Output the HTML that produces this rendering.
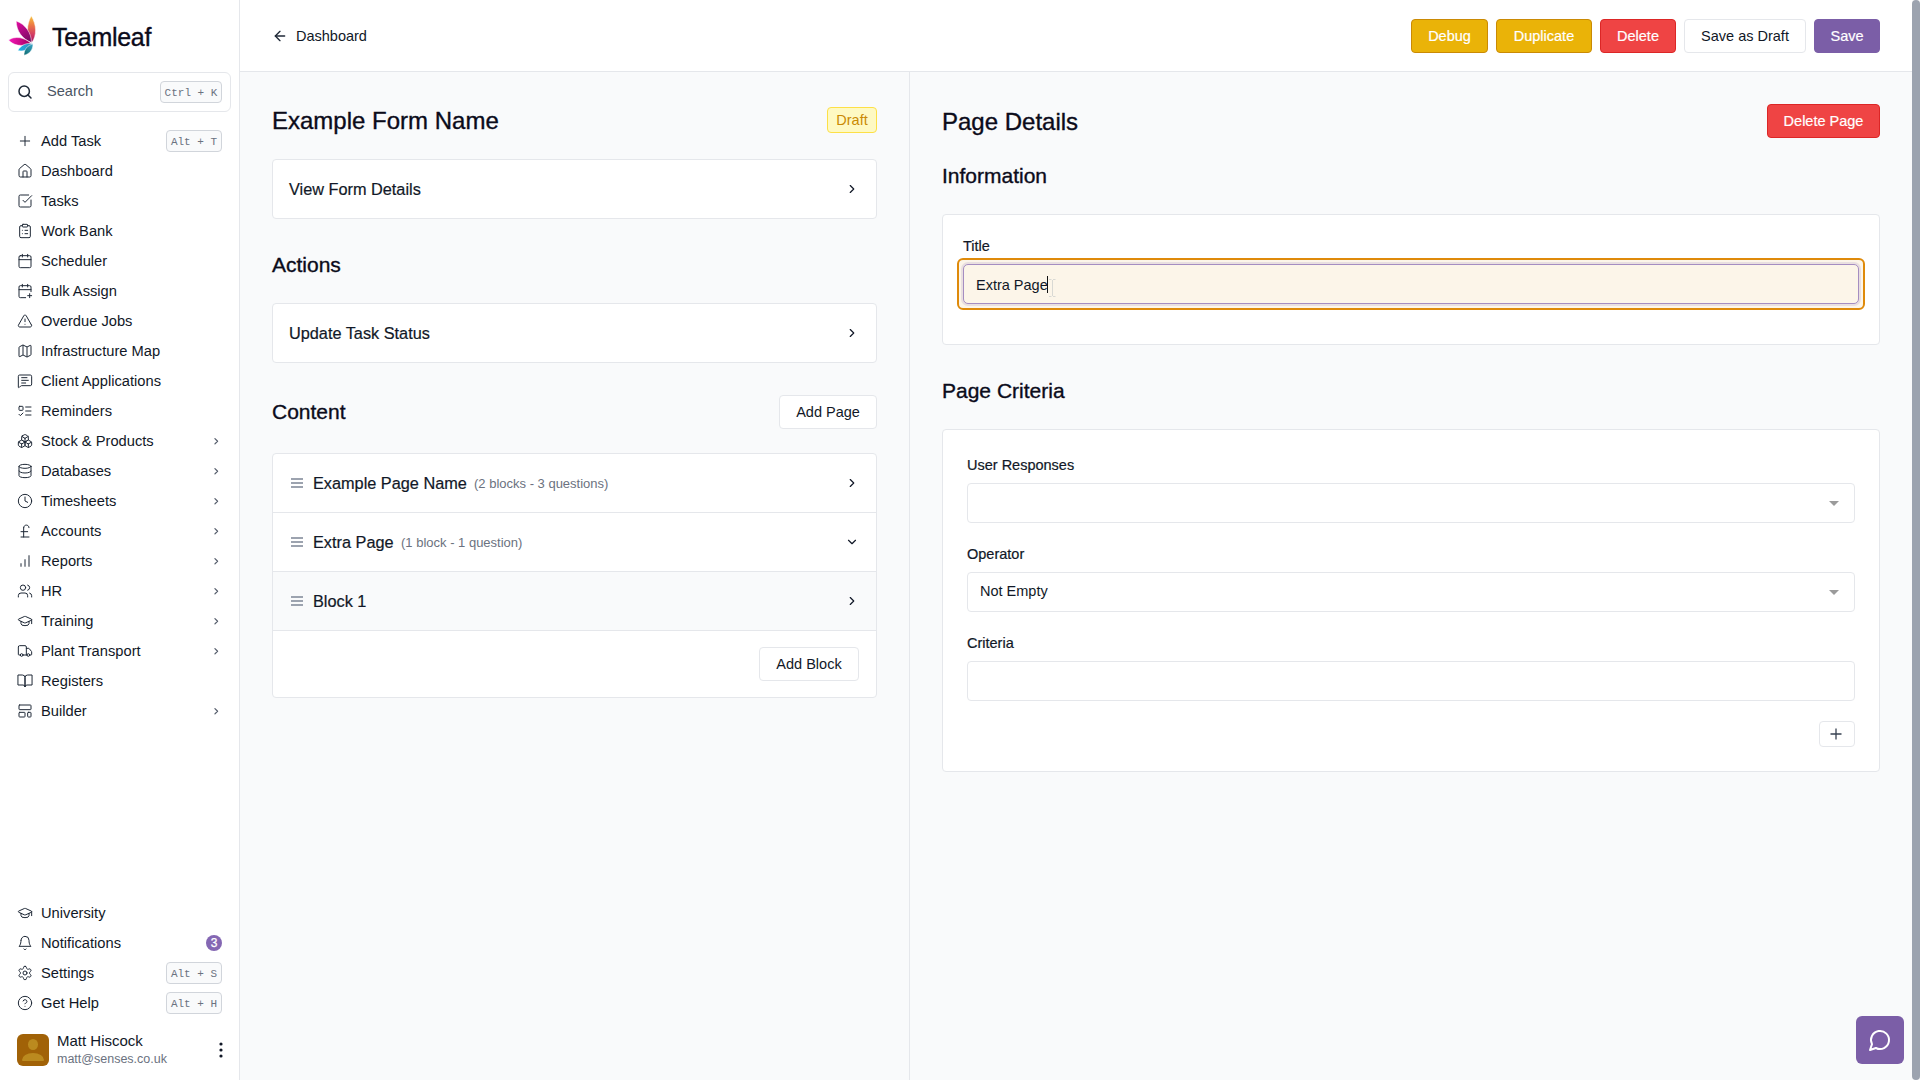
<!DOCTYPE html>
<html><head><meta charset="utf-8">
<style>
*{box-sizing:border-box;margin:0;padding:0}
html,body{width:1920px;height:1080px;overflow:hidden;background:#f9fafb;font-family:"Liberation Sans",sans-serif;color:#111827}
.abs{position:absolute}
#sb{position:absolute;left:0;top:0;width:240px;height:1080px;background:#fff;border-right:1px solid #e5e7eb}
#hdr{position:absolute;left:240px;top:0;width:1672px;height:72px;background:#fff;border-bottom:1px solid #e5e7eb}
#scroll{position:absolute;left:1912px;top:0;width:8px;height:1080px;background:#9ca3af;border-radius:4px}
#divider{position:absolute;left:909px;top:72px;width:1px;height:1008px;background:#e5e7eb}
.nav{position:absolute;left:8px;width:222px;height:30px;display:flex;align-items:center;font-size:15px;color:#111827}
.nav svg{position:absolute;left:9px;top:7px;width:16px;height:16px;fill:none;stroke:#1f2937;stroke-width:1.5;stroke-linecap:round;stroke-linejoin:round}
.nav span.t{position:absolute;left:33px;top:6px;line-height:18px;font-size:14.7px}
.nav .chev{position:absolute;left:202.7px;top:9.6px;width:10.5px;height:10.5px;stroke-width:2.9;stroke:#565e6c}
.kbd{position:absolute;font-family:"Liberation Mono",monospace;font-size:11px;color:#6b7280;background:#f9fafb;border:1px solid #d1d5db;border-radius:4px;height:22px;line-height:22px;text-align:center}
.k2{left:158px;top:4px;width:56px}
.badge{position:absolute;left:198px;top:7px;width:16px;height:16px;border-radius:8px;background:#8467b3;color:#fff;font-size:12px;-webkit-text-stroke:0.25px #fff;text-align:center;line-height:17px}
.btn{position:absolute;height:34px;border-radius:4px;font-size:14.5px;display:flex;align-items:center;justify-content:center;border:1px solid transparent}
.card{position:absolute;background:#fff;border:1px solid #e5e7eb;border-radius:4px}
.h2{position:absolute;font-size:20px;color:#111827}
.lbl{position:absolute;font-size:14.5px;color:#111827;-webkit-text-stroke:0.2px #111827}
.t16{font-size:16.3px;color:#111827;-webkit-text-stroke:0.2px #111827}
.sub{font-size:13px;color:#6b7280}
.chv{position:absolute;width:14px;height:14px;fill:none;stroke:#111827;stroke-width:2;stroke-linecap:round;stroke-linejoin:round}
.grip{position:absolute;width:16px;height:16px;fill:none;stroke:#9ca3af;stroke-width:2}
.inp{position:absolute;background:#fff;border:1px solid #e5e7eb;border-radius:4px}
</style></head><body>
<div id="sb">
  <!-- logo -->
  <svg class="abs" style="left:4px;top:12px" width="40" height="48" viewBox="4 12 40 48">
    <defs>
      <linearGradient id="lg1" gradientUnits="userSpaceOnUse" x1="31" y1="16" x2="31" y2="42"><stop offset="0" stop-color="#f7c23a"/><stop offset="0.35" stop-color="#ec7a45"/><stop offset="0.7" stop-color="#d43d63"/><stop offset="1" stop-color="#a81060"/></linearGradient>
      <linearGradient id="lg2" gradientUnits="userSpaceOnUse" x1="17" y1="21" x2="31" y2="42"><stop offset="0" stop-color="#e20ba0"/><stop offset="1" stop-color="#6e0c5c"/></linearGradient>
      <linearGradient id="lg3" gradientUnits="userSpaceOnUse" x1="9" y1="40" x2="31" y2="43"><stop offset="0" stop-color="#f515b8"/><stop offset="1" stop-color="#a0005a"/></linearGradient>
      <linearGradient id="lg4" gradientUnits="userSpaceOnUse" x1="18" y1="50" x2="33" y2="44"><stop offset="0" stop-color="#1ab4e6"/><stop offset="1" stop-color="#3b8ab5"/></linearGradient>
      <linearGradient id="lg5" gradientUnits="userSpaceOnUse" x1="24" y1="55" x2="33" y2="44"><stop offset="0" stop-color="#0f6b70"/><stop offset="1" stop-color="#3aa6c8"/></linearGradient>
    </defs>
    <path d="M31.80 42.50 C37.01 35.73 36.81 25.05 31.30 15.80 C26.14 25.24 26.34 35.92 31.80 42.50Z" stroke="#fff" stroke-width="0.5" fill="url(#lg1)"/><path d="M31.50 42.50 C31.47 32.80 25.35 24.20 16.20 21.00 C16.23 30.70 22.35 39.30 31.50 42.50Z" stroke="#fff" stroke-width="0.5" fill="url(#lg2)"/><path d="M31.00 43.20 C23.88 37.06 14.92 35.78 8.60 40.00 C13.48 45.82 22.44 47.10 31.00 43.20Z" stroke="#fff" stroke-width="0.5" fill="url(#lg3)"/><path d="M32.80 43.80 C26.70 42.32 20.70 45.04 17.80 50.60 C23.90 52.08 29.90 49.36 32.80 43.80Z" stroke="#fff" stroke-width="0.5" fill="url(#lg4)"/><path d="M33.00 44.00 C27.49 45.10 23.89 49.58 24.00 55.20 C29.51 54.10 33.11 49.62 33.00 44.00Z" stroke="#fff" stroke-width="0.5" fill="url(#lg5)"/>
  </svg>
  <div class="abs" style="left:52px;top:23px;font-size:25px;color:#0b0b1a;letter-spacing:-0.3px;-webkit-text-stroke:0.35px #0b0b1a">Teamleaf</div>
  <!-- search -->
  <div class="abs" style="left:8px;top:72px;width:223px;height:40px;border:1px solid #e5e7eb;border-radius:6px"></div>
  <svg class="abs" style="left:17px;top:84px" width="16" height="16" viewBox="0 0 16 16" fill="none" stroke="#1f2937" stroke-width="1.5" stroke-linecap="round"><circle cx="7.2" cy="7.2" r="5.2"/><path d="M11 11l3 3"/></svg>
  <div class="abs" style="left:47px;top:83px;font-size:14.6px;color:#4b5563">Search</div>
  <div class="kbd" style="left:160px;top:81px;width:62px">Ctrl + K</div>

  <div id="navs">
<div class="nav" style="top:126px"><svg viewBox="0 0 24 24"><path d="M5 12h14"/><path d="M12 5v14"/></svg><span class="t">Add Task</span><span class="kbd k2">Alt + T</span></div>
<div class="nav" style="top:156px"><svg viewBox="0 0 24 24"><path d="M15 21v-8a1 1 0 0 0-1-1h-4a1 1 0 0 0-1 1v8"/><path d="M3 10a2 2 0 0 1 .709-1.528l7-5.999a2 2 0 0 1 2.582 0l7 5.999A2 2 0 0 1 21 10v9a2 2 0 0 1-2 2H5a2 2 0 0 1-2-2z"/></svg><span class="t">Dashboard</span></div>
<div class="nav" style="top:186px"><svg viewBox="0 0 24 24"><path d="M21 10.5V19a2 2 0 0 1-2 2H5a2 2 0 0 1-2-2V5a2 2 0 0 1 2-2h12.5"/><path d="m9 11 3 3L22 4"/></svg><span class="t">Tasks</span></div>
<div class="nav" style="top:216px"><svg viewBox="0 0 24 24"><rect width="8" height="4" x="8" y="2" rx="1" ry="1"/><path d="M16 4h2a2 2 0 0 1 2 2v14a2 2 0 0 1-2 2H6a2 2 0 0 1-2-2V6a2 2 0 0 1 2-2h2"/><path d="M12 11h4"/><path d="M12 16h4"/><path d="M8 11h.01"/><path d="M8 16h.01"/></svg><span class="t">Work Bank</span></div>
<div class="nav" style="top:246px"><svg viewBox="0 0 24 24"><path d="M8 2v4"/><path d="M16 2v4"/><rect width="18" height="18" x="3" y="4" rx="2"/><path d="M3 10h18"/></svg><span class="t">Scheduler</span></div>
<div class="nav" style="top:276px"><svg viewBox="0 0 24 24"><path d="M8 2v4"/><path d="M16 2v4"/><path d="M21 13V6a2 2 0 0 0-2-2H5a2 2 0 0 0-2 2v14a2 2 0 0 0 2 2h8"/><path d="M3 10h18"/><path d="M16 19h6"/><path d="M19 16v6"/></svg><span class="t">Bulk Assign</span></div>
<div class="nav" style="top:306px"><svg viewBox="0 0 24 24"><path d="m21.73 18-8-14a2 2 0 0 0-3.48 0l-8 14A2 2 0 0 0 4 21h16a2 2 0 0 0 1.73-3"/><path d="M12 9v4"/><path d="M12 17h.01"/></svg><span class="t">Overdue Jobs</span></div>
<div class="nav" style="top:336px"><svg viewBox="0 0 24 24"><path d="M14.106 5.553a2 2 0 0 0 1.788 0l3.659-1.83A1 1 0 0 1 21 4.619v12.764a1 1 0 0 1-.553.894l-4.553 2.277a2 2 0 0 1-1.788 0l-4.212-2.106a2 2 0 0 0-1.788 0l-3.659 1.83A1 1 0 0 1 3 19.381V6.618a1 1 0 0 1 .553-.894l4.553-2.277a2 2 0 0 1 1.788 0z"/><path d="M15 5.764v15"/><path d="M9 3.236v15"/></svg><span class="t">Infrastructure Map</span></div>
<div class="nav" style="top:366px"><svg viewBox="0 0 24 24"><path d="M22 17a2 2 0 0 1-2 2H6.828a2 2 0 0 0-1.414.586l-2.202 2.202A.71.71 0 0 1 2 21.286V5a2 2 0 0 1 2-2h16a2 2 0 0 1 2 2z"/><path d="M7 11h10"/><path d="M7 15h6"/><path d="M7 7h8"/></svg><span class="t">Client Applications</span></div>
<div class="nav" style="top:396px"><svg viewBox="0 0 24 24"><rect x="3" y="5" width="6" height="6" rx="1"/><path d="m3 17 2 2 4-4"/><path d="M13 6h8"/><path d="M13 12h8"/><path d="M13 18h8"/></svg><span class="t">Reminders</span></div>
<div class="nav" style="top:426px"><svg viewBox="0 0 24 24"><path d="M2.97 12.92A2 2 0 0 0 2 14.63v3.24a2 2 0 0 0 .97 1.71l3 1.8a2 2 0 0 0 2.06 0L12 19v-5.5l-5-3-4.03 2.42Z"/><path d="m7 16.5-4.74-2.85"/><path d="m7 16.5 5-3"/><path d="M7 16.5v5.17"/><path d="M12 13.5V19l3.97 2.38a2 2 0 0 0 2.06 0l3-1.8a2 2 0 0 0 .97-1.71v-3.24a2 2 0 0 0-.97-1.71L17 10.5l-5 3Z"/><path d="m17 16.5-5-3"/><path d="m17 16.5 4.74-2.85"/><path d="M17 16.5v5.17"/><path d="M7.97 4.42A2 2 0 0 0 7 6.13v4.37l5 3 5-3V6.13a2 2 0 0 0-.97-1.71l-3-1.8a2 2 0 0 0-2.06 0l-3 1.8Z"/><path d="M12 8 7.26 5.15"/><path d="m12 8 4.74-2.85"/><path d="M12 13.5V8"/></svg><span class="t">Stock &amp; Products</span><svg class="chev" viewBox="0 0 24 24"><path d="m9 18 6-6-6-6"/></svg></div>
<div class="nav" style="top:456px"><svg viewBox="0 0 24 24"><ellipse cx="12" cy="5" rx="9" ry="3"/><path d="M3 5V19A9 3 0 0 0 21 19V5"/><path d="M3 12A9 3 0 0 0 21 12"/></svg><span class="t">Databases</span><svg class="chev" viewBox="0 0 24 24"><path d="m9 18 6-6-6-6"/></svg></div>
<div class="nav" style="top:486px"><svg viewBox="0 0 24 24"><circle cx="12" cy="12" r="10"/><path d="M12 6v6l4 2"/></svg><span class="t">Timesheets</span><svg class="chev" viewBox="0 0 24 24"><path d="m9 18 6-6-6-6"/></svg></div>
<div class="nav" style="top:516px"><svg viewBox="0 0 24 24"><path d="M18 7c0-5.333-8-5.333-8 0"/><path d="M10 7v14"/><path d="M6 21h12"/><path d="M6 13h10"/></svg><span class="t">Accounts</span><svg class="chev" viewBox="0 0 24 24"><path d="m9 18 6-6-6-6"/></svg></div>
<div class="nav" style="top:546px"><svg viewBox="0 0 24 24"><path d="M18 20V4"/><path d="M12 20V10"/><path d="M6 20v-4"/></svg><span class="t">Reports</span><svg class="chev" viewBox="0 0 24 24"><path d="m9 18 6-6-6-6"/></svg></div>
<div class="nav" style="top:576px"><svg viewBox="0 0 24 24"><path d="M16 21v-2a4 4 0 0 0-4-4H6a4 4 0 0 0-4 4v2"/><circle cx="9" cy="7" r="4"/><path d="M22 21v-2a4 4 0 0 0-3-3.87"/><path d="M16 3.13a4 4 0 0 1 0 7.75"/></svg><span class="t">HR</span><svg class="chev" viewBox="0 0 24 24"><path d="m9 18 6-6-6-6"/></svg></div>
<div class="nav" style="top:606px"><svg viewBox="0 0 24 24"><path d="M21.42 10.922a1 1 0 0 0-.019-1.838L12.83 5.18a2 2 0 0 0-1.66 0L2.6 9.08a1 1 0 0 0 0 1.832l8.57 3.908a2 2 0 0 0 1.66 0z"/><path d="M22 10v6"/><path d="M6 12.5V16a6 3 0 0 0 12 0v-3.5"/></svg><span class="t">Training</span><svg class="chev" viewBox="0 0 24 24"><path d="m9 18 6-6-6-6"/></svg></div>
<div class="nav" style="top:636px"><svg viewBox="0 0 24 24"><path d="M14 18V6a2 2 0 0 0-2-2H4a2 2 0 0 0-2 2v11a1 1 0 0 0 1 1h2"/><path d="M15 18H9"/><path d="M19 18h2a1 1 0 0 0 1-1v-3.65a1 1 0 0 0-.22-.624l-3.48-4.35A1 1 0 0 0 17.52 8H14"/><circle cx="17" cy="18" r="2"/><circle cx="7" cy="18" r="2"/></svg><span class="t">Plant Transport</span><svg class="chev" viewBox="0 0 24 24"><path d="m9 18 6-6-6-6"/></svg></div>
<div class="nav" style="top:666px"><svg viewBox="0 0 24 24"><path d="M2 3h6a4 4 0 0 1 4 4v14a3 3 0 0 0-3-3H2z"/><path d="M22 3h-6a4 4 0 0 0-4 4v14a3 3 0 0 1 3-3h7z"/></svg><span class="t">Registers</span></div>
<div class="nav" style="top:696px"><svg viewBox="0 0 24 24"><rect width="18" height="7" x="3" y="3" rx="1"/><rect width="9" height="7" x="3" y="14" rx="1"/><rect width="5" height="7" x="16" y="14" rx="1"/></svg><span class="t">Builder</span><svg class="chev" viewBox="0 0 24 24"><path d="m9 18 6-6-6-6"/></svg></div>
<div class="nav" style="top:898px"><svg viewBox="0 0 24 24"><path d="M21.42 10.922a1 1 0 0 0-.019-1.838L12.83 5.18a2 2 0 0 0-1.66 0L2.6 9.08a1 1 0 0 0 0 1.832l8.57 3.908a2 2 0 0 0 1.66 0z"/><path d="M22 10v6"/><path d="M6 12.5V16a6 3 0 0 0 12 0v-3.5"/></svg><span class="t">University</span></div>
<div class="nav" style="top:928px"><svg viewBox="0 0 24 24"><path d="M6 8a6 6 0 0 1 12 0c0 7 3 9 3 9H3s3-2 3-9"/><path d="M10.3 21a1.94 1.94 0 0 0 3.4 0"/></svg><span class="t">Notifications</span><span class="badge">3</span></div>
<div class="nav" style="top:958px"><svg viewBox="0 0 24 24"><path d="M12.22 2h-.44a2 2 0 0 0-2 2v.18a2 2 0 0 1-1 1.73l-.43.25a2 2 0 0 1-2 0l-.15-.08a2 2 0 0 0-2.73.73l-.22.38a2 2 0 0 0 .73 2.73l.15.1a2 2 0 0 1 1 1.72v.51a2 2 0 0 1-1 1.74l-.15.09a2 2 0 0 0-.73 2.73l.22.38a2 2 0 0 0 2.73.73l.15-.08a2 2 0 0 1 2 0l.43.25a2 2 0 0 1 1 1.73V20a2 2 0 0 0 2 2h.44a2 2 0 0 0 2-2v-.18a2 2 0 0 1 1-1.73l.43-.25a2 2 0 0 1 2 0l.15.08a2 2 0 0 0 2.73-.73l.22-.39a2 2 0 0 0-.73-2.73l-.15-.08a2 2 0 0 1-1-1.74v-.5a2 2 0 0 1 1-1.74l.15-.09a2 2 0 0 0 .73-2.73l-.22-.38a2 2 0 0 0-2.73-.73l-.15.08a2 2 0 0 1-2 0l-.43-.25a2 2 0 0 1-1-1.73V4a2 2 0 0 0-2-2z"/><circle cx="12" cy="12" r="3"/></svg><span class="t">Settings</span><span class="kbd k2">Alt + S</span></div>
<div class="nav" style="top:988px"><svg viewBox="0 0 24 24"><circle cx="12" cy="12" r="10"/><path d="M9.09 9a3 3 0 0 1 5.83 1c0 2-3 3-3 3"/><path d="M12 17h.01"/></svg><span class="t">Get Help</span><span class="kbd k2">Alt + H</span></div>
</div><!--/navs-->
</div>

<div id="hdr">
  <svg class="abs" style="left:32px;top:28px" width="16" height="16" viewBox="0 0 24 24" fill="none" stroke="#1f2937" stroke-width="2" stroke-linecap="round" stroke-linejoin="round"><path d="m12 19-7-7 7-7"/><path d="M19 12H5"/></svg>
  <div class="abs" style="left:56px;top:28px;font-size:14.5px;color:#111827">Dashboard</div>
  <div class="btn" style="left:1171px;top:19px;width:77px;background:#eab308;border-color:#ca8a04;color:#fff;-webkit-text-stroke:0.2px #fff">Debug</div>
  <div class="btn" style="left:1256px;top:19px;width:96px;background:#eab308;border-color:#ca8a04;color:#fff;-webkit-text-stroke:0.2px #fff">Duplicate</div>
  <div class="btn" style="left:1360px;top:19px;width:76px;background:#ef4444;border-color:#dc2626;color:#fff;-webkit-text-stroke:0.2px #fff">Delete</div>
  <div class="btn" style="left:1444px;top:19px;width:122px;background:#fff;border-color:#e5e7eb;color:#111827">Save as Draft</div>
  <div class="btn" style="left:1574px;top:19px;width:66px;background:#7b5ea7;border-color:#7b5ea7;color:#fff;-webkit-text-stroke:0.2px #fff">Save</div>
</div>

<div id="divider"></div>

<!-- LEFT COLUMN -->
<div class="abs" style="left:272px;top:107px;font-size:24px;color:#0b0b1a;-webkit-text-stroke:0.35px #0b0b1a">Example Form Name</div>
<div class="abs" style="left:827px;top:107px;width:50px;height:26px;border:1px solid #fde047;background:#fef9c3;border-radius:4px;color:#ca8a04;font-size:14.5px;text-align:center;line-height:24px">Draft</div>

<div class="card" style="left:272px;top:159px;width:605px;height:60px"></div>
<div class="abs t16" style="left:289px;top:180px">View Form Details</div>
<svg class="chv" style="left:845px;top:182px" viewBox="0 0 24 24"><path d="m9 18 6-6-6-6"/></svg>

<div class="abs" style="left:272px;top:253px;font-size:21px;color:#0b0b1a;-webkit-text-stroke:0.35px #0b0b1a">Actions</div>
<div class="card" style="left:272px;top:303px;width:605px;height:60px"></div>
<div class="abs t16" style="left:289px;top:324px">Update Task Status</div>
<svg class="chv" style="left:845px;top:326px" viewBox="0 0 24 24"><path d="m9 18 6-6-6-6"/></svg>

<div class="abs" style="left:272px;top:400px;font-size:21px;color:#0b0b1a;-webkit-text-stroke:0.35px #0b0b1a">Content</div>
<div class="btn" style="left:779px;top:395px;width:98px;background:#fff;border-color:#e5e7eb;color:#111827">Add Page</div>

<div class="card" style="left:272px;top:453px;width:605px;height:245px;overflow:hidden">
  <div class="abs" style="left:0;top:118px;width:603px;height:59px;background:#f9fafb"></div>
  <div class="abs" style="left:0;top:58px;width:603px;height:1px;background:#e5e7eb"></div>
  <div class="abs" style="left:0;top:117px;width:603px;height:1px;background:#e5e7eb"></div>
  <div class="abs" style="left:0;top:176px;width:603px;height:1px;background:#e5e7eb"></div>
</div>
<div class="abs" style="left:291px;top:478px;width:12px;height:2px;background:#9ca3af"></div><div class="abs" style="left:291px;top:482px;width:12px;height:2px;background:#9ca3af"></div><div class="abs" style="left:291px;top:486px;width:12px;height:2px;background:#9ca3af"></div>
<div class="abs t16" style="left:313px;top:474px">Example Page Name</div>
<div class="abs sub" style="left:474px;top:476px">(2 blocks - 3 questions)</div>
<svg class="chv" style="left:845px;top:476px" viewBox="0 0 24 24"><path d="m9 18 6-6-6-6"/></svg>

<div class="abs" style="left:291px;top:537px;width:12px;height:2px;background:#9ca3af"></div><div class="abs" style="left:291px;top:541px;width:12px;height:2px;background:#9ca3af"></div><div class="abs" style="left:291px;top:545px;width:12px;height:2px;background:#9ca3af"></div>
<div class="abs t16" style="left:313px;top:533px">Extra Page</div>
<div class="abs sub" style="left:401px;top:535px">(1 block - 1 question)</div>
<svg class="chv" style="left:845px;top:535px" viewBox="0 0 24 24"><path d="m6 9 6 6 6-6"/></svg>

<div class="abs" style="left:291px;top:596px;width:12px;height:2px;background:#9ca3af"></div><div class="abs" style="left:291px;top:600px;width:12px;height:2px;background:#9ca3af"></div><div class="abs" style="left:291px;top:604px;width:12px;height:2px;background:#9ca3af"></div>
<div class="abs t16" style="left:313px;top:592px">Block 1</div>
<svg class="chv" style="left:845px;top:594px" viewBox="0 0 24 24"><path d="m9 18 6-6-6-6"/></svg>

<div class="btn" style="left:759px;top:647px;width:100px;background:#fff;border-color:#e5e7eb;color:#111827">Add Block</div>

<!-- RIGHT COLUMN -->
<div class="abs" style="left:942px;top:108px;font-size:24px;color:#0b0b1a;-webkit-text-stroke:0.35px #0b0b1a">Page Details</div>
<div class="btn" style="left:1767px;top:104px;width:113px;background:#ef4444;border-color:#dc2626;color:#fff;-webkit-text-stroke:0.2px #fff">Delete Page</div>
<div class="abs" style="left:942px;top:164px;font-size:21px;color:#0b0b1a;-webkit-text-stroke:0.35px #0b0b1a">Information</div>

<div class="card" style="left:942px;top:214px;width:938px;height:131px"></div>
<div class="lbl" style="left:963px;top:238px">Title</div>
<div class="abs" style="left:957px;top:258px;width:908px;height:52px;border:2px solid #df8a0a;border-radius:6px;background:#fcf5e9"></div>
<div class="abs" style="left:963px;top:264px;width:896px;height:40px;border:1px solid #a58dc1;border-radius:5px;background:#fcf5e9;box-shadow:0 0 0 2px #e9dfe0"></div>
<div class="abs" style="left:976px;top:277px;font-size:14.5px;color:#111827">Extra Page</div>
<div class="abs" style="left:1047px;top:276px;width:1px;height:17px;background:#111"></div>
<svg class="abs" style="left:1048px;top:279px" width="9" height="18" viewBox="0 0 9 18" fill="none" stroke="#d9d9d4" stroke-width="1"><path d="M1 0.5h2.5M5 0.5h2.5M4.5 1v16M1 17.5h2.5M5 17.5h2.5"/></svg>

<div class="abs" style="left:942px;top:379px;font-size:21px;color:#0b0b1a;-webkit-text-stroke:0.35px #0b0b1a">Page Criteria</div>
<div class="card" style="left:942px;top:429px;width:938px;height:343px"></div>
<div class="lbl" style="left:967px;top:457px">User Responses</div>
<div class="inp" style="left:967px;top:483px;width:888px;height:40px"></div>
<svg class="abs" style="left:1829px;top:501px" width="10" height="5" viewBox="0 0 10 5"><path d="M0 0h10L5 5z" fill="#9b9b9b"/></svg>
<div class="lbl" style="left:967px;top:546px">Operator</div>
<div class="inp" style="left:967px;top:572px;width:888px;height:40px"></div>
<div class="abs" style="left:980px;top:583px;font-size:14.5px;color:#111827">Not Empty</div>
<svg class="abs" style="left:1829px;top:590px" width="10" height="5" viewBox="0 0 10 5"><path d="M0 0h10L5 5z" fill="#9b9b9b"/></svg>
<div class="lbl" style="left:967px;top:635px">Criteria</div>
<div class="inp" style="left:967px;top:661px;width:888px;height:40px"></div>
<div class="btn" style="left:1819px;top:721px;width:36px;height:26px;background:#fff;border-color:#e5e7eb"></div>
<svg class="abs" style="left:1830px;top:728px" width="12" height="12" viewBox="0 0 12 12" fill="none" stroke="#374151" stroke-width="1.3"><path d="M6 0.5v11M0.5 6h11"/></svg>

<!-- chat -->
<div class="abs" style="left:1856px;top:1016px;width:48px;height:48px;border-radius:6px;background:#7b5ea7"></div>
<svg class="abs" style="left:1868px;top:1028px" width="24" height="24" viewBox="0 0 24 24" fill="none" stroke="#fff" stroke-width="2" stroke-linecap="round" stroke-linejoin="round"><path d="M7.9 20A9 9 0 1 0 4 16.1L2 22Z"/></svg>

<!-- user -->
<div class="abs" style="left:17px;top:1034px;width:32px;height:32px;border-radius:6px;background:#a16207;overflow:hidden">
  <div class="abs" style="left:10.7px;top:5px;width:10.5px;height:11px;border-radius:50%;background:#bb8a1f"></div>
  <div class="abs" style="left:5px;top:18.5px;width:22px;height:8.5px;border-radius:11px 11px 1px 1px / 7px 7px 1px 1px;background:#bb8a1f"></div>
</div>
<div class="abs" style="left:57px;top:1032px;font-size:15px;color:#111827">Matt Hiscock</div>
<div class="abs" style="left:57px;top:1052px;font-size:12.5px;color:#6b7280">matt@senses.co.uk</div>
<svg class="abs" style="left:217px;top:1042px" width="8" height="16" viewBox="0 0 8 16" fill="#111827"><circle cx="4" cy="2" r="1.6"/><circle cx="4" cy="8" r="1.6"/><circle cx="4" cy="14" r="1.6"/></svg>

<div id="scroll"></div>
</body></html>
